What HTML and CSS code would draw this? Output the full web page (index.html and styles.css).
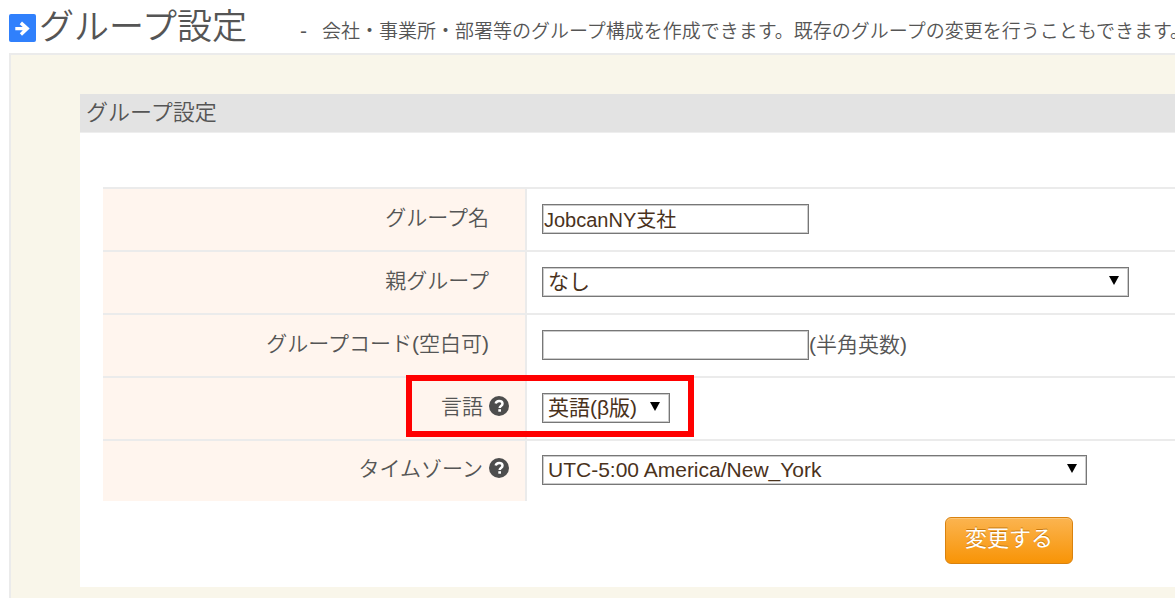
FILE: index.html
```
<!DOCTYPE html>
<html lang="ja">
<head>
<meta charset="utf-8">
<title>グループ設定</title>
<link rel="stylesheet" href="styles.css">
</head>
<body>
<header class="page-header">
  <svg class="page-icon" viewBox="0 0 27 28" aria-hidden="true">
    <rect width="27" height="28" rx="2" fill="#3080fc"/>
    <path d="M6.3 13h7.4l-3-2.8 2.3-2.6 7.7 7-7.7 7.2-2.2-2.5 3-3H6.3z" fill="#fff"/>
  </svg>
  <h1 class="page-title">グループ設定</h1>
  <span class="dash">-</span>
  <p class="page-note">会社・事業所・部署等のグループ構成を作成できます。既存のグループの変更を行うこともできます。</p>
</header>
<main class="content">
  <form class="panel">
    <h2 class="panel-title">グループ設定</h2>
    <div class="panel-body">
      <table class="fields">
        <tr>
          <th scope="row"><label for="name">グループ名</label></th>
          <td><div class="field"><input class="control text" id="name" type="text" value="JobcanNY支社"></div></td>
        </tr>
        <tr>
          <th scope="row"><label for="parent">親グループ</label></th>
          <td><div class="field"><span class="picker picker-wide"><select class="control" id="parent"><option>なし</option></select><svg class="arrow" viewBox="0 0 10 9" aria-hidden="true"><path d="M0 0h10L5 9z"/></svg></span></div></td>
        </tr>
        <tr>
          <th scope="row"><label for="code">グループコード(空白可)</label></th>
          <td><div class="field"><input class="control text" id="code" type="text"><span class="hint">(半角英数)</span></div></td>
        </tr>
        <tr>
          <th scope="row" class="has-help"><label for="lang">言語</label><svg class="help" viewBox="0 0 20 20" aria-hidden="true"><circle cx="10" cy="10" r="10" fill="#4d4d4d"/><path d="M6.7 7.6C7.1 5.7 8.3 5 10.1 5c2 0 3.4 1 3.4 2.7 0 2.3-2.8 2.3-2.8 4.2" fill="none" stroke="#fff" stroke-width="2.5"/><path d="M9.3 13.2h2.7v2.5H9.3z" fill="#fff"/></svg></th>
          <td class="marked"><div class="field"><span class="picker picker-small"><select class="control" id="lang"><option>英語(β版)</option></select><svg class="arrow" viewBox="0 0 10 9" aria-hidden="true"><path d="M0 0h10L5 9z"/></svg></span></div><div class="marker"></div></td>
        </tr>
        <tr>
          <th scope="row" class="has-help"><label for="zone">タイムゾーン</label><svg class="help" viewBox="0 0 20 20" aria-hidden="true"><circle cx="10" cy="10" r="10" fill="#4d4d4d"/><path d="M6.7 7.6C7.1 5.7 8.3 5 10.1 5c2 0 3.4 1 3.4 2.7 0 2.3-2.8 2.3-2.8 4.2" fill="none" stroke="#fff" stroke-width="2.5"/><path d="M9.3 13.2h2.7v2.5H9.3z" fill="#fff"/></svg></th>
          <td><div class="field"><span class="picker picker-zone"><select class="control" id="zone"><option>UTC-5:00 America/New_York</option></select><svg class="arrow" viewBox="0 0 10 9" aria-hidden="true"><path d="M0 0h10L5 9z"/></svg></span></div></td>
        </tr>
      </table>
      <div class="actions"><button class="submit" type="submit">変更する</button></div>
    </div>
  </form>
</main>
</body>
</html>
```
FILE: styles.css
```
* {
  box-sizing: border-box;
}

body {
  margin: 0;
  min-height: 100vh;
  display: flex;
  flex-direction: column;
  overflow: hidden;
  background: #fff;
  color: #555;
  font-family: "Liberation Sans", "Noto Sans CJK JP", sans-serif;
  font-size: 21px;
  line-height: 30px;
}

h1, h2, p {
  margin: 0;
  font-weight: 350;
}

.page-header {
  display: flex;
  align-items: center;
  height: 53px;
  padding-left: 9px;
  white-space: nowrap;
  overflow: hidden;
}

.page-icon {
  flex: none;
  width: 27px;
  height: 28px;
  margin-top: 3px;
}

.page-title {
  flex: none;
  margin-left: 3px;
  padding-bottom: 6px;
  font-family: "Noto Sans CJK JP", sans-serif;
  font-size: 35px;
  line-height: 48px;
}

.dash {
  margin-left: 53px;
  padding-top: 8px;
}

.page-note {
  margin-left: 15px;
  padding-top: 6px;
  font-family: "Noto Sans CJK JP", sans-serif;
  font-size: 19px;
}

.content {
  flex: 1;
  margin-left: 9px;
  padding: 39px 0 11px 69px;
  border-top: 2px solid #ebebeb;
  border-left: 2px solid #ebebeb;
  background: #f9f6ea;
}

.panel {
  background: #fff;
}

.panel-title {
  height: 39px;
  padding-left: 6px;
  border-bottom: 1px solid #eee;
  background: #e3e3e3;
  font-size: 22px;
  line-height: 38px;
}

.panel-body {
  padding: 54px 0 23px 23px;
}

.fields {
  width: 100%;
  border-collapse: collapse;
  table-layout: fixed;
}

.fields th,
.fields td {
  height: 63px;
  border-top: 2px solid #ebebeb;
}

.fields tr:last-child th,
.fields tr:last-child td {
  height: 61px;
}

.fields th {
  width: 423px;
  padding: 0 36px 4px 0;
  border-right: 2px solid #ebebeb;
  background: #fff5ee;
  font-weight: 350;
  text-align: right;
  white-space: nowrap;
}

.fields th.has-help {
  padding-right: 16px;
}

.fields td {
  padding: 0 0 2px 15px;
}

.marked {
  position: relative;
}

.help {
  width: 20px;
  height: 20px;
  margin-left: 6px;
  vertical-align: -2px;
}

.field {
  display: flex;
  align-items: center;
}

.hint {
  font-weight: 350;
}

.control {
  display: block;
  height: 30px;
  margin: 0;
  border: 1px solid #777;
  border-radius: 0;
  outline: 0;
  box-shadow: inset 0 0 0 1px #ccc;
  background: #fff;
  color: #4a321c;
  font: inherit;
  line-height: 26px;
}

.text {
  width: 267px;
  padding: 0 1px;
  font-size: 20px;
}

.picker {
  position: relative;
}

.picker-wide {
  width: 587px;
}

.picker-small {
  width: 128px;
}

.picker-zone {
  width: 545px;
}

.picker .control {
  width: 100%;
  padding: 0 20px 0 5px;
  appearance: none;
}

.arrow {
  position: absolute;
  top: 9px;
  right: 10px;
  width: 10px;
  height: 9px;
  pointer-events: none;
}

.marker {
  position: absolute;
  top: -3px;
  left: -121px;
  width: 288px;
  height: 62px;
  border: 6px solid #f00;
  pointer-events: none;
}

.actions {
  display: flex;
  justify-content: flex-end;
  padding: 16px 102px 0 0;
}

.submit {
  width: 128px;
  height: 47px;
  padding: 0 0 4px;
  border: 1px solid #d9820f;
  border-radius: 6px;
  background: linear-gradient(#fbb450, #f89406);
  box-shadow: inset 0 1px 0 #fcc577;
  color: #fff;
  font: inherit;
  font-size: 22px;
  text-shadow: 0 -1px 0 #c77a10;
}
```
